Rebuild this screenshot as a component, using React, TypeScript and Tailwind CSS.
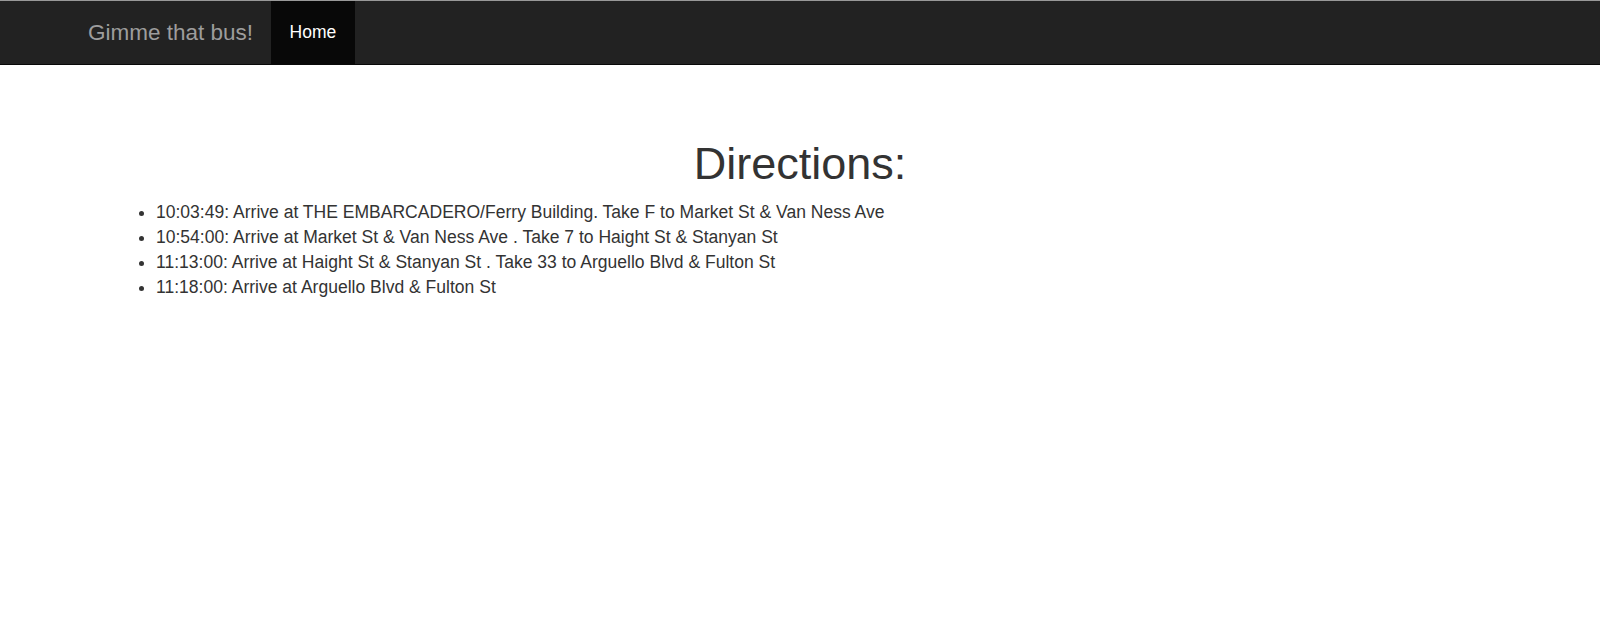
import React from "react";

const items = [
  "10:03:49: Arrive at THE EMBARCADERO/Ferry Building. Take F to Market St & Van Ness Ave",
  "10:54:00: Arrive at Market St & Van Ness Ave . Take 7 to Haight St & Stanyan St",
  "11:13:00: Arrive at Haight St & Stanyan St . Take 33 to Arguello Blvd & Fulton St",
  "11:18:00: Arrive at Arguello Blvd & Fulton St",
];

export default function App() {
  return (
    <div className="min-h-[640px] bg-white font-['Liberation_Sans',Arial,sans-serif] text-[#333]">
      <nav className="border-t border-t-[#999] border-b border-b-[#080808] bg-[#222]">
        <div className="ml-[69px] flex h-[63px] items-stretch">
          <a className="flex items-center pl-[19px] pr-[17.5px] text-[22.5px] leading-[25px] text-[#9d9d9d]">
            Gimme that bus!
          </a>
          <a className="flex items-center bg-[#080808] px-[19px] text-[17.5px] leading-[25px] text-white">
            Home
          </a>
        </div>
      </nav>
      <main className="pt-[73.6px]">
        <h1 className="mb-[11.5px] text-center text-[45px] leading-[49.5px] font-normal">
          Directions:
        </h1>
        <ul className="ml-[106px] list-disc pl-[50px] text-[17.55px] leading-[25px]">
          {items.map((t) => (
            <li key={t}>{t}</li>
          ))}
        </ul>
      </main>
    </div>
  );
}
